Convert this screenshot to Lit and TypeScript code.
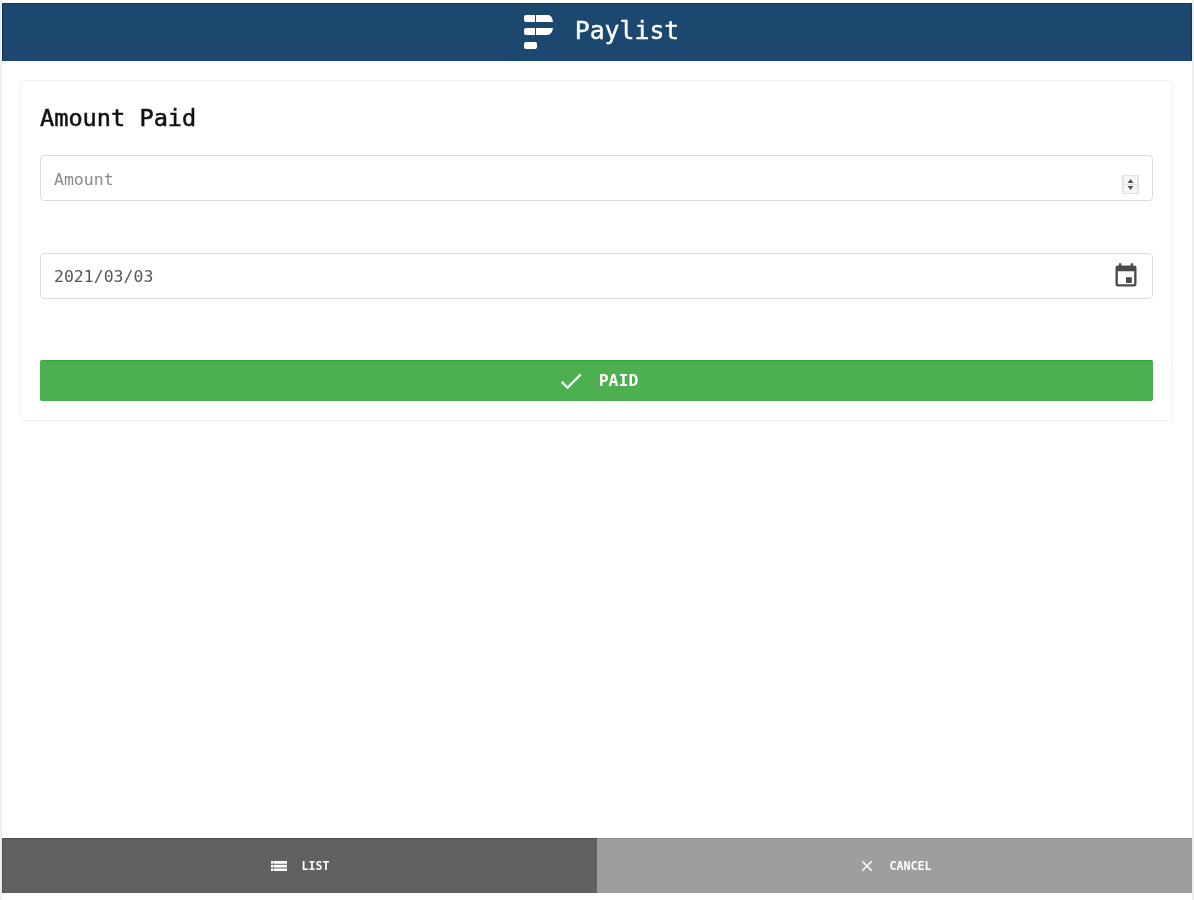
import { LitElement, html, css } from "lit";
import { customElement } from "lit/decorators.js";

@customElement("app-root")
export class AppRoot extends LitElement {
  static styles = css`
    :host {
      display: block;
      font-family: "DejaVu Sans Mono", "Liberation Mono", monospace;
    }
    .page {
      box-sizing: border-box;
      height: 900px;
      padding: 3px 2px 7px;
      display: flex;
      flex-direction: column;
      background: #fff;
      box-shadow: inset 2px 0 0 #eeeeee, inset -2px 0 0 #eeeeee;
      filter: blur(0.6px);
    }
    .topbar {
      height: 58px;
      flex: none;
      background: #1c4870;
      color: #fff;
      display: flex;
      align-items: center;
      justify-content: center;
      gap: 21px;
      padding-left: 8px;
      border-top: 1px solid #14315f;
      border-right: 1px solid #14315f;
      border-left: 1px solid #14315f;
      box-sizing: border-box;
    }
    .brand {
      font-size: 24.8px;
      line-height: 1;
      margin-bottom: 2px;
      -webkit-text-stroke: 0.4px #fff;
    }
    .logo {
      width: 31px;
      height: 36px;
      display: block;
    }
    .content {
      flex: 1;
      padding: 19px 19px 0 18px;
    }
    .card {
      box-sizing: border-box;
      height: 341px;
      padding: 23px 19px 0;
      border: 1px solid #f0f0f0;
      border-radius: 4px;
      display: flex;
      flex-direction: column;
    }
    h1 {
      margin: 0 0 23px;
      font-size: 23.6px;
      line-height: 28px;
      font-weight: 400;
      color: #111;
      -webkit-text-stroke: 0.5px #111;
    }
    .field {
      box-sizing: border-box;
      height: 46px;
      display: flex;
      align-items: center;
      padding: 0 12px 0 13px;
      border: 1px solid #dcdcdc;
      border-radius: 4px;
      margin-bottom: 52px;
    }
    .field input {
      flex: 1;
      min-width: 0;
      border: 0;
      outline: 0;
      padding: 0;
      background: transparent;
      font: 16.5px "DejaVu Sans Mono", monospace;
      color: #555;
    }
    .field input::placeholder {
      color: #8a8a8a;
    }
    .amount {
      margin-top: 3px;
    }
    .spinner {
      width: 17px;
      height: 19px;
      margin: 12px 1px 0 0;
      display: block;
    }
    .calendar {
      width: 28px;
      height: 28px;
      display: block;
    }
    .paid {
      box-sizing: border-box;
      height: 41px;
      margin-top: 9px;
      border: 0;
      border-top: 1px solid #2ea63a;
      border-radius: 2px;
      background: #4caf50;
      color: #fff;
      display: flex;
      align-items: center;
      justify-content: center;
      gap: 14px;
      font: 700 16.5px "DejaVu Sans Mono", monospace;
      padding: 0 0 1px 2px;
    }
    .paid svg {
      width: 28px;
      height: 28px;
    }
    .footer {
      height: 55px;
      flex: none;
      display: flex;
    }
    .footer button {
      flex: 1;
      border: 0;
      padding: 0;
      color: #fff;
      display: flex;
      align-items: center;
      justify-content: center;
      gap: 14px;
      font: 700 11.6px "DejaVu Sans Mono", monospace;
    }
    .list {
      background: #616161;
      box-shadow: inset 1px 1px 0 #4f4f4f;
    }
    .cancel {
      background: #9e9e9e;
      box-shadow: inset 0 1px 0 #8c8c8c;
    }
    .footer svg {
      width: 18px;
      height: 18px;
    }
  `;

  render() {
    return html`
      <div class="page">
        <header class="topbar">
          <svg class="logo" viewBox="0 0 31 36" fill="#fff">
            <path d="M1 2a2 2 0 0 1 2-2h9v7H3a2 2 0 0 1-2-2zM13 0h12q4 0 5 7H13z" />
            <path d="M1 15a2 2 0 0 1 2-2h9v7H3a2 2 0 0 1-2-2zM13 13h17q-1 7-6 7H13z" />
            <rect x="1" y="27" width="13" height="7" rx="2" />
          </svg>
          <span class="brand">Paylist</span>
        </header>
        <main class="content">
          <section class="card">
            <h1>Amount Paid</h1>
            <label class="field">
              <input class="amount" type="text" placeholder="Amount" />
              <svg class="spinner" viewBox="0 0 17 19">
                <path d="M0 0h17v19H0z" fill="#e4e4e4" />
                <path d="M2 1h13v17H2z" fill="#f6f6f6" />
                <path d="M2 9h13v1H2z" fill="#dddddd" />
                <path d="M8.5 4l3 4h-6zM8.5 15l-3-4h6z" fill="#555" />
              </svg>
            </label>
            <label class="field">
              <input type="text" value="2021/03/03" />
              <svg class="calendar" viewBox="0 0 24 24" fill="#4a4a4a">
                <path
                  d="M19 3h-1V1h-2v2H8V1H6v2H5a2 2 0 0 0-2 2v14a2 2 0 0 0 2 2h14a2 2 0 0 0 2-2V5a2 2 0 0 0-2-2zm0 16H5V8h14zM12 13h5v5h-5z"
                />
              </svg>
            </label>
            <button class="paid">
              <svg viewBox="0 0 24 24" fill="#fff">
                <path d="M9 16.2 4.8 12l-1.4 1.4L9 19 21 7l-1.4-1.4z" />
              </svg>
              PAID
            </button>
          </section>
        </main>
        <footer class="footer">
          <button class="list">
            <svg viewBox="0 0 18 18" fill="#fff">
              <path d="M1 4h2.5v2.7H1zM1 7.7h2.5v2.7H1zM1 11.4h2.5v2.7H1zM4 4h13v2.7H4zM4 7.7h13v2.7H4zM4 11.4h13v2.7H4z" />
            </svg>
            LIST
          </button>
          <button class="cancel">
            <svg viewBox="0 0 24 24" fill="#fff">
              <path
                d="M19 6.41 17.59 5 12 10.59 6.41 5 5 6.41 10.59 12 5 17.59 6.41 19 12 13.41 17.59 19 19 17.59 13.41 12z"
              />
            </svg>
            CANCEL
          </button>
        </footer>
      </div>
    `;
  }
}
